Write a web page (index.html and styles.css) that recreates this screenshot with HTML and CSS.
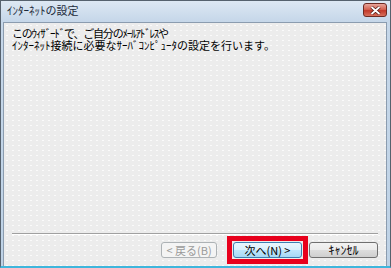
FILE: index.html
```html
<!DOCTYPE html>
<html lang="ja">
  <head>
    <meta charset="UTF-8" />
    <title>ｲﾝﾀｰﾈｯﾄの設定</title>
    <link rel="stylesheet" href="styles.css">
  </head>
  <body>
    <div class="window">
      <div class="titlebar">
        <span class="title"><span class="hk">ｲﾝﾀｰﾈｯﾄ</span>の設定</span>
        <button class="close-button">
          <svg width="11" height="9" viewBox="0 0 11 9">
            <path d="M1.5 1 L9.5 8 M9.5 1 L1.5 8" stroke="#4a1410" stroke-width="3.2" />
            <path d="M1.5 1 L9.5 8 M9.5 1 L1.5 8" stroke="#ffffff" stroke-width="1.8" />
          </svg>
        </button>
      </div>
      <div class="panel">
        <div class="message">
          <p class="tight">この<span class="hk">ｳｨｻﾞｰﾄﾞ</span>で、ご自分の<span class="hk">ﾒｰﾙｱﾄﾞﾚｽ</span>や</p>
          <p><span class="hk">ｲﾝﾀｰﾈｯﾄ</span>接続に必要な<span class="hk">ｻｰﾊﾞｺﾝﾋﾟｭｰﾀ</span>の設定を行います。</p>
        </div>
        <div class="separator"></div>
        <div class="button-row">
          <button class="wiz-button back" disabled>&lt; 戻る(<u>B</u>)</button>
          <div class="highlight">
            <button class="wiz-button next">次へ(<u>N</u>) &gt;</button>
          </div>
          <button class="wiz-button cancel">ｷｬﾝｾﾙ</button>
        </div>
      </div>
    </div>
  </body>
</html>
```

FILE: styles.css
```css
* {
  padding: 0px;
  margin: 0px;
  box-sizing: border-box;
}
body {
  font-family: "Noto Sans CJK JP", "DejaVu Sans", sans-serif;
  font-size: 11px;
  color: #000000;
}
.hk {
  font-feature-settings: "palt";
}
.window {
  width: 391px;
  height: 268px;
  display: flex;
  flex-direction: column;
  border: 1px solid #56626e;
  border-bottom: 2px solid #3fb6dc;
  background: linear-gradient(#dde8f3, #c6d7e9 20px, #bed2e6);
  padding: 0px 3px 0px 2px;
}
.titlebar {
  height: 21px;
  display: flex;
  flex-direction: row;
  align-items: center;
  justify-content: space-between;
}
.title {
  padding-left: 4px;
  margin-top: -4px;
  font-size: 11px;
  line-height: 12px;
  color: #1c2a3a;
}
.close-button {
  width: 24px;
  height: 14px;
  margin-top: -3px;
  border: 1px solid #6e2a22;
  border-radius: 3px;
  background: linear-gradient(#e8a59a, #d46352 45%, #c2392a 55%, #d8705c);
  display: flex;
  align-items: center;
  justify-content: center;
}
.panel {
  flex: 1;
  display: flex;
  flex-direction: column;
  border: 1px solid #8b9caf;
  border-bottom: none;
  background-color: #ececec;
  background-image: radial-gradient(circle, #fafafa 0.7px, transparent 0.9px);
  background-size: 6px 5px;
}
.message {
  flex: 1;
  padding: 4px 8px;
  line-height: 12px;
}
.tight {
  letter-spacing: -1.2px;
}
.separator {
  margin: 0px 8px;
  border-top: 1px solid #a0a0a0;
  border-bottom: 1px solid #ffffff;
}
.button-row {
  display: flex;
  flex-direction: row;
  justify-content: flex-end;
  align-items: center;
  padding: 7px 8px 8px 0px;
}
.wiz-button {
  height: 16px;
  font-family: "Noto Sans CJK JP", "DejaVu Sans", sans-serif;
  font-size: 11px;
  line-height: 12px;
  border: 1px solid #707070;
  border-radius: 3px;
  background: linear-gradient(#f3f3f3, #ebebeb 48%, #dddddd 52%, #cfcfcf);
  color: #000000;
}
.wiz-button u {
  text-decoration: none;
}
.back {
  width: 56px;
  margin-right: 16px;
  border-color: #adb2b5;
  background: #f4f4f4;
  color: #9a9a9a;
}
.highlight {
  outline: 5px solid #e8001c;
  outline-offset: 1px;
  margin-right: 7px;
  display: flex;
}
.next {
  width: 69px;
  border-color: #3c7fb1;
  background: linear-gradient(#eaf6fd, #d9f0fc 48%, #bee6fd 52%, #a7d9f5);
}
.cancel {
  width: 69px;
  font-size: 12px;
}
```
